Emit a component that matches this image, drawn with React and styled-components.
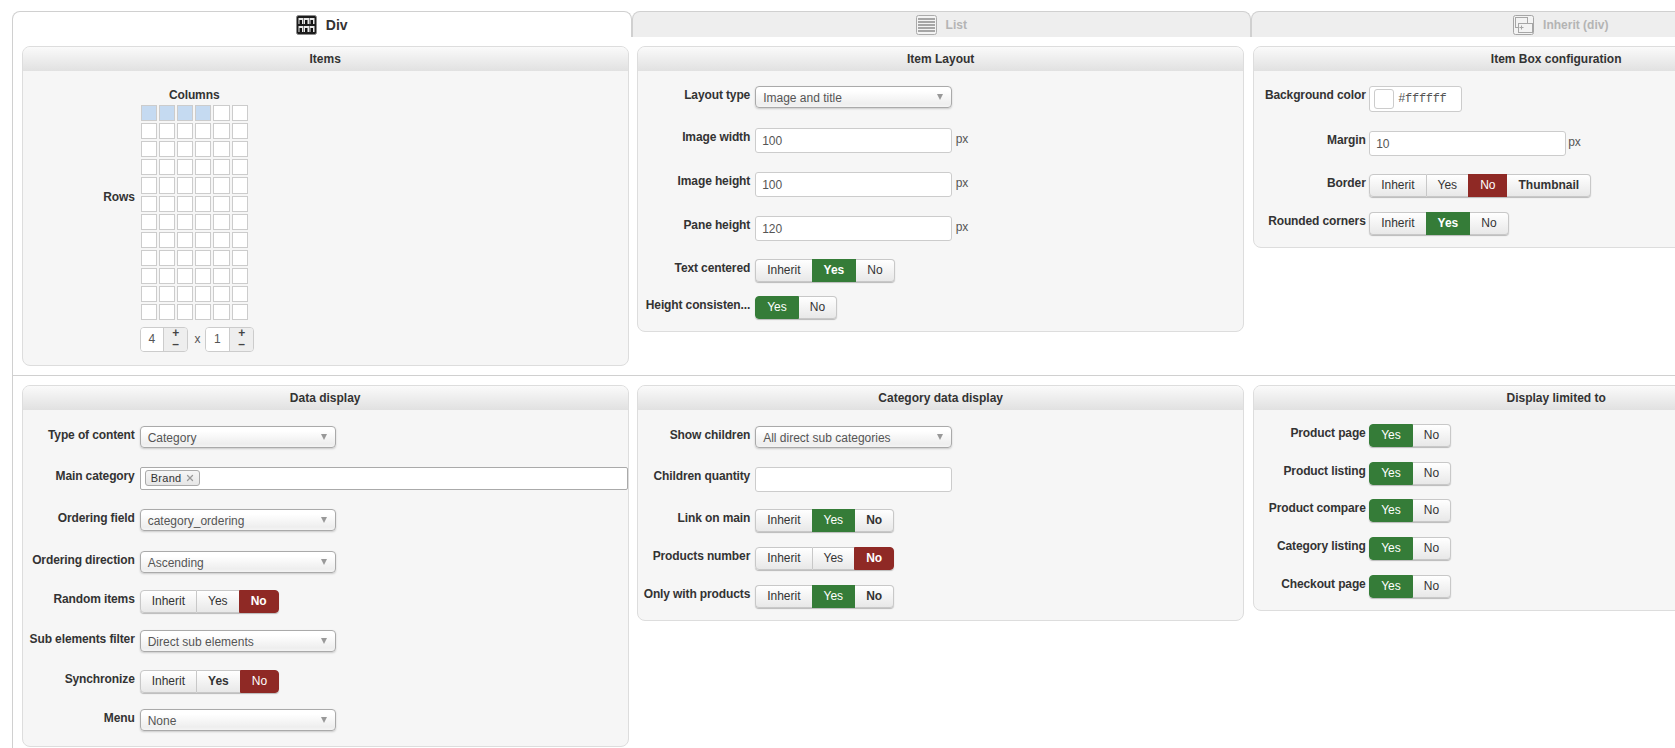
import React from 'react';
import styled, { createGlobalStyle } from 'styled-components';
import { X } from 'lucide-react';

const GlobalStyle = createGlobalStyle`
	html, body {
		margin: 0;
		height: 100%;
		overflow: hidden;
		background: #fff;
	}
	* {
		box-sizing: border-box;
	}
	#root {
		width: 1675px;
		height: 748px;
		overflow: hidden;
		font-family: 'Liberation Sans', Arial, sans-serif;
		font-size: 12px;
		color: #333;
	}
`;

const Page = styled.div`
	width: 1900px;
	padding: 11px 0 0 12px;
`;

const Tabs = styled.div`
	display: flex;
`;

const Tab = styled.div`
	flex: none;
	width: 619.5px;
	height: 26px;
	display: flex;
	align-items: center;
	justify-content: center;
	gap: 9px;
	border: 1px solid #d0d0d0;
	border-bottom: none;
	border-radius: 8px 8px 0 0;
	font-weight: bold;
	font-size: ${(p) => (p.$active ? '14px' : '12px')};
	color: ${(p) => (p.$active ? '#333' : '#b4b4b4')};
	background: ${(p) => (p.$active ? '#fff' : '#eee')};

	svg {
		flex: none;
		opacity: ${(p) => (p.$active ? 1 : 0.32)};
	}
`;

const Content = styled.div`
	border-left: 1px solid #d0d0d0;
`;

const Section = styled.div`
	display: flex;
	align-items: flex-start;
	gap: 8.5px;
	padding: 9px 0 9px 8.7px;
	border-top: ${(p) => (p.$second ? '1px solid #d0d0d0' : 'none')};
`;

const Panel = styled.div`
	--field-gap: ${(p) => p.$fieldGap || 5}px;
	flex: none;
	width: 607px;
	border: 1px solid #ddd;
	border-radius: 8px;
	background: #f6f6f6;
	overflow: hidden;
`;

const PanelTitle = styled.div`
	height: 24px;
	line-height: 25px;
	text-align: center;
	font-weight: bold;
	background: linear-gradient(#fafafa, #e1e1e1);
`;

const PanelBody = styled.div`
	padding: ${(p) => p.$top || 15}px 0 ${(p) => p.$bottom || 12}px;
`;

const Row = styled.div`
	display: flex;
	align-items: flex-start;
	gap: var(--field-gap);
	height: ${(p) => p.$h}px;
`;

const LabelCell = styled.div`
	flex: none;
	width: 112px;
	display: flex;
	justify-content: flex-end;
`;

const LabelText = styled.div`
	line-height: 14px;
	padding-top: 2px;
	font-weight: bold;
	letter-spacing: -0.12px;
	white-space: nowrap;
`;

const Select = styled.div`
	position: relative;
	width: 196.5px;
	height: 22px;
	padding-left: 7px;
	line-height: 22px;
	color: #555;
	border: 1px solid #aaa;
	border-radius: 4px;
	background: linear-gradient(#fff 20%, #eee 85%, #f4f4f4);
	box-shadow: 0 1px 2px rgba(0, 0, 0, 0.18);

	&:after {
		content: '';
		position: absolute;
		right: 8px;
		top: 7px;
		border-left: 3.5px solid transparent;
		border-right: 3.5px solid transparent;
		border-top: 6px solid #999;
	}
`;

const TextInput = styled.input`
	width: 196.5px;
	height: 25px;
	padding: 0 6px;
	font: 12px 'Liberation Sans', Arial, sans-serif;
	color: #555;
	background: #fff;
	border: 1px solid #ccc;
	border-radius: 3px;
	outline: none;
`;

const Unit = styled.span`
	margin-left: -1px;
	line-height: 22px;
	color: #555;
`;

const ToggleGroup = styled.div`
	display: inline-flex;
	height: 23px;
	border-radius: 4px;
	box-shadow: 0 1px 1px rgba(0, 0, 0, 0.25);
`;

const palette = {
	yes: '#357c38',
	no: '#8f2925',
};

const ToggleOption = styled.div`
	padding: 0 11px;
	line-height: 21px;
	border: 1px solid ${(p) => (p.$on ? palette[p.$on] : '#c8c8c8')};
	border-left-width: ${(p) => (p.$first || p.$on ? '1px' : '0')};
	border-right-width: ${(p) => (p.$last || p.$on || p.$divider ? '1px' : '0')};
	font-weight: ${(p) => (p.$bold ? 'bold' : 'normal')};
	color: ${(p) => (p.$on ? '#fff' : '#333')};
	background: ${(p) => (p.$on ? palette[p.$on] : 'linear-gradient(#fff, #e8e8e8)')};

	&:first-child {
		border-radius: 4px 0 0 4px;
	}
	&:last-child {
		border-radius: 0 4px 4px 0;
	}
`;

const ColorBox = styled.div`
	width: 92.5px;
	height: 26px;
	display: flex;
	align-items: center;
	gap: 4px;
	padding-left: 4px;
	background: #fff;
	border: 1px solid #ccc;
	border-radius: 3px;
`;

const Swatch = styled.div`
	width: 20px;
	height: 20px;
	background: #fff;
	border: 1px solid #ccc;
	border-radius: 3px;
`;

const ColorCode = styled.span`
	font-family: 'Liberation Mono', monospace;
	letter-spacing: -0.3px;
	color: #555;
`;

const TagBox = styled.div`
	width: 488px;
	height: 23px;
	padding: 2px 0 0 4px;
	background: #fff;
	border: 1px solid #aaa;
	border-radius: 2px;
`;

const Tag = styled.div`
	display: inline-flex;
	align-items: center;
	gap: 3px;
	width: 55px;
	height: 16px;
	padding-left: 5px;
	font-size: 11px;
	letter-spacing: 0.3px;
	color: #333;
	border: 1px solid #aaa;
	border-radius: 3px;
	background: linear-gradient(#f6f6f6, #e6e6e6);
`;

const GridLayout = styled.div`
	display: flex;
	gap: var(--field-gap);
`;

const RowsLabel = styled(LabelCell)`
	height: 222px;
	align-items: center;
	font-weight: bold;
	letter-spacing: -0.12px;
`;

const ColumnsLabel = styled.div`
	width: 109px;
	height: 19px;
	line-height: 16px;
	padding-top: 1px;
	text-align: center;
	font-weight: bold;
	letter-spacing: -0.12px;
`;

const CellGrid = styled.div`
	display: grid;
	grid-template-columns: repeat(6, 16.2px);
	grid-auto-rows: 16.12px;
	gap: 2px;
	margin-left: 1px;
`;

const Cell = styled.div`
	background: ${(p) => (p.$on ? '#c5daf1' : '#fff')};
	border: 1px solid #ccc;
`;

const SpinnerRow = styled.div`
	display: flex;
	align-items: center;
	margin-top: 6.5px;
`;

const Spinner = styled.div`
	display: flex;
	width: ${(p) => p.$w}px;
	height: 25px;
	border: 1px solid #ccc;
	border-radius: 4px;
	overflow: hidden;
`;

const SpinnerValue = styled.div`
	flex: 1;
	line-height: 22px;
	text-align: center;
	color: #555;
	background: #fff;
`;

const SpinnerButtons = styled.div`
	flex: none;
	width: 24px;
	display: flex;
	flex-direction: column;
	align-items: center;
	justify-content: space-between;
	padding: 0 0 2px;
	font-size: 12px;
	line-height: 11px;
	font-weight: bold;
	color: #444;
	background: #eee;
	border-left: 1px solid #ccc;
`;

const Times = styled.span`
	width: 16.5px;
	padding-left: 2px;
	text-align: center;
	color: #555;
`;

const DivIcon = () => (
	<svg width="21" height="20" viewBox="0 0 21 20">
		<rect x="0.5" y="0.5" width="20" height="19" rx="2" fill="#1c1c1c" stroke="#8a8a8a" />
		{[2.5, 8, 13.5].map((x) =>
			[3, 11].map((y) => (
				<g key={`${x}-${y}`}>
					<rect x={x} y={y} width="5" height="6" fill="#e8e8e8" />
					<rect x={x + 1} y={y + 2} width="2.5" height="4" fill="#111" />
				</g>
			))
		)}
	</svg>
);

const ListIcon = () => (
	<svg width="21" height="20" viewBox="0 0 21 20">
		<rect x="0.5" y="0.5" width="20" height="19" rx="2" fill="#fff" stroke="#222" />
		{[3, 6, 9, 12, 15].map((y) => (
			<rect key={y} x="2" y={y} width="17" height="2" fill="#111" />
		))}
	</svg>
);

const InheritIcon = () => (
	<svg width="21" height="20" viewBox="0 0 21 20" fill="none" stroke="#111">
		<rect x="0.5" y="0.5" width="20" height="19" rx="2" fill="#fff" />
		<rect x="2.5" y="2.5" width="12" height="10" />
		<rect x="5.5" y="8.5" width="14" height="9" fill="#fff" />
		<path d="M8.5 10.5v4M6.5 12.5h4" />
	</svg>
);

const Field = ({ label, h, children }) => (
	<Row $h={h}>
		<LabelCell>
			<LabelText>{label}</LabelText>
		</LabelCell>
		{children}
	</Row>
);

// opts: [text, 'yes' | 'no' | undefined, bold]
const Toggle = ({ opts }) => (
	<ToggleGroup>
		{opts.map(([text, on, bold], i) => {
			const nextOn = opts[i + 1] && opts[i + 1][1];
			return (
				<ToggleOption
					key={text}
					$on={on}
					$bold={bold}
					$first={i === 0}
					$last={i === opts.length - 1}
					$divider={!on && !nextOn}
				>
					{text}
				</ToggleOption>
			);
		})}
	</ToggleGroup>
);

const inheritYes = (yesBold, noBold) => [['Inherit'], ['Yes', 'yes', yesBold], ['No', undefined, noBold]];
const inheritNo = (yesBold, noBold) => [['Inherit'], ['Yes', undefined, yesBold], ['No', 'no', noBold]];
const yesNo = [['Yes', 'yes'], ['No']];

const App = () => {
	return (
		<Page>
			<GlobalStyle />
			<Tabs>
				<Tab $active>
					<DivIcon />
					Div
				</Tab>
				<Tab>
					<ListIcon />
					List
				</Tab>
				<Tab>
					<InheritIcon />
					Inherit (div)
				</Tab>
			</Tabs>
			<Content>
				<Section>
					<Panel>
						<PanelTitle>Items</PanelTitle>
						<PanelBody $bottom={13}>
							<GridLayout>
								<RowsLabel>Rows</RowsLabel>
								<div>
									<ColumnsLabel>Columns</ColumnsLabel>
									<CellGrid>
										{Array.from({ length: 72 }, (_, i) => (
											<Cell key={i} $on={i < 4} />
										))}
									</CellGrid>
									<SpinnerRow>
										<Spinner $w={48.5}>
											<SpinnerValue>4</SpinnerValue>
											<SpinnerButtons>
												<span>+</span>
												<span>–</span>
											</SpinnerButtons>
										</Spinner>
										<Times>x</Times>
										<Spinner $w={49.5}>
											<SpinnerValue>1</SpinnerValue>
											<SpinnerButtons>
												<span>+</span>
												<span>–</span>
											</SpinnerButtons>
										</Spinner>
									</SpinnerRow>
								</div>
							</GridLayout>
						</PanelBody>
					</Panel>
					<Panel>
						<PanelTitle>Item Layout</PanelTitle>
						<PanelBody>
							<Field label="Layout type" h={42}>
								<Select>Image and title</Select>
							</Field>
							<Field label="Image width" h={44}>
								<TextInput defaultValue="100" />
								<Unit>px</Unit>
							</Field>
							<Field label="Image height" h={44}>
								<TextInput defaultValue="100" />
								<Unit>px</Unit>
							</Field>
							<Field label="Pane height" h={43}>
								<TextInput defaultValue="120" />
								<Unit>px</Unit>
							</Field>
							<Field label="Text centered" h={37}>
								<Toggle opts={inheritYes(true)} />
							</Field>
							<Field label="Height consisten..." h={23}>
								<Toggle opts={yesNo} />
							</Field>
						</PanelBody>
					</Panel>
					<Panel $fieldGap={3.5}>
						<PanelTitle>Item Box configuration</PanelTitle>
						<PanelBody>
							<Field label="Background color" h={45}>
								<ColorBox>
									<Swatch />
									<ColorCode>#ffffff</ColorCode>
								</ColorBox>
							</Field>
							<Field label="Margin" h={43}>
								<TextInput defaultValue="10" />
								<Unit>px</Unit>
							</Field>
							<Field label="Border" h={38}>
								<Toggle opts={[['Inherit'], ['Yes'], ['No', 'no'], ['Thumbnail', undefined, true]]} />
							</Field>
							<Field label="Rounded corners" h={23}>
								<Toggle opts={inheritYes(true)} />
							</Field>
						</PanelBody>
					</Panel>
				</Section>
				<Section $second>
					<Panel>
						<PanelTitle>Data display</PanelTitle>
						<PanelBody $top={16}>
							<Field label="Type of content" h={41}>
								<Select>Category</Select>
							</Field>
							<Field label="Main category" h={42}>
								<TagBox>
									<Tag>
										Brand
										<X size={10} strokeWidth={3} color="#999" />
									</Tag>
								</TagBox>
							</Field>
							<Field label="Ordering field" h={42}>
								<Select>category_ordering</Select>
							</Field>
							<Field label="Ordering direction" h={39}>
								<Select>Ascending</Select>
							</Field>
							<Field label="Random items" h={40}>
								<Toggle opts={inheritNo(false, true)} />
							</Field>
							<Field label="Sub elements filter" h={40}>
								<Select>Direct sub elements</Select>
							</Field>
							<Field label="Synchronize" h={39}>
								<Toggle opts={inheritNo(true)} />
							</Field>
							<Field label="Menu" h={25}>
								<Select>None</Select>
							</Field>
						</PanelBody>
					</Panel>
					<Panel>
						<PanelTitle>Category data display</PanelTitle>
						<PanelBody $top={16}>
							<Field label="Show children" h={41}>
								<Select>All direct sub categories</Select>
							</Field>
							<Field label="Children quantity" h={42}>
								<TextInput />
							</Field>
							<Field label="Link on main" h={38}>
								<Toggle opts={inheritYes(false, true)} />
							</Field>
							<Field label="Products number" h={38}>
								<Toggle opts={inheritNo(false, true)} />
							</Field>
							<Field label="Only with products" h={23}>
								<Toggle opts={inheritYes(false, true)} />
							</Field>
						</PanelBody>
					</Panel>
					<Panel $fieldGap={3.5}>
						<PanelTitle>Display limited to</PanelTitle>
						<PanelBody $top={14}>
							<Field label="Product page" h={38}>
								<Toggle opts={yesNo} />
							</Field>
							<Field label="Product listing" h={37}>
								<Toggle opts={yesNo} />
							</Field>
							<Field label="Product compare" h={38}>
								<Toggle opts={yesNo} />
							</Field>
							<Field label="Category listing" h={38}>
								<Toggle opts={yesNo} />
							</Field>
							<Field label="Checkout page" h={23}>
								<Toggle opts={yesNo} />
							</Field>
						</PanelBody>
					</Panel>
				</Section>
			</Content>
		</Page>
	);
};

export default App;
